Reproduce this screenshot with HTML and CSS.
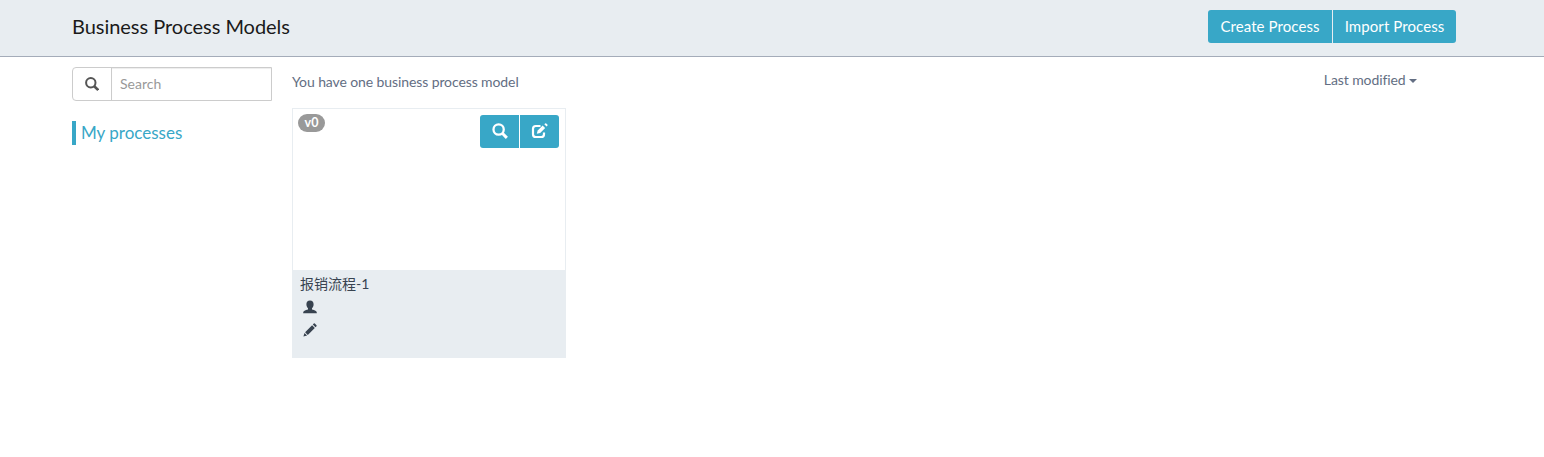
FILE: index.html
```
<!DOCTYPE html>
<html lang="en">
<head>
<meta charset="utf-8">
<title>Business Process Models</title>
<link rel="stylesheet" href="styles.css">
</head>
<body>
<header class="header">
  <h2>Business Process Models</h2>
  <div class="btn-group">
    <button class="btn create">Create Process</button>
    <button class="btn import">Import Process</button>
  </div>
</header>
<main class="content">
  <aside class="sidebar">
    <div class="search">
      <span class="addon"><svg width="14" height="14" viewBox="0 0 14 14"><circle cx="5.8" cy="5.7" r="4.7" fill="none" stroke="currentColor" stroke-width="2"/><path d="M9 9l4.200 4" stroke="currentColor" stroke-width="2.6"/></svg></span>
      <input type="text" placeholder="Search">
    </div>
    <a class="filter">My processes</a>
  </aside>
  <section class="models">
    <div class="toolbar">
      <span class="message">You have one business process model</span>
      <span class="sort">Last modified <i class="caret"></i></span>
    </div>
    <article class="card">
      <div class="preview">
        <span class="badge">v0</span>
        <div class="btn-group">
          <button class="btn icon-btn"><svg width="16" height="16" viewBox="0 0 14 14"><circle cx="5.8" cy="5.7" r="4.5" fill="none" stroke="currentColor" stroke-width="2"/><path d="M9 9l4 4" stroke="currentColor" stroke-width="2.6"/></svg></button>
          <button class="btn icon-btn"><svg width="17" height="16" viewBox="0 0 17 16"><path d="M9.500 3H4.800Q2 3 2 5.800v5.400Q2 14 4.800 14h5.400Q13 14 13 11.200V9.500" fill="none" stroke="currentColor" stroke-width="2.2"/><path d="M5.800 10.800l.9-3.200 5-5 2.500 2.500-5 5z" fill="currentColor"/><path d="M13.300 1.200l.8-.8q.6-.4 1.100 0l1.200 1.200q.4.600 0 1.100l-.8.8z" fill="currentColor"/><path d="M11.900 2l2.900 2.900" stroke="#38a7c7" stroke-width="1"/></svg></button>
        </div>
      </div>
      <div class="details">
        <h3>报销流程-1</h3>
        <svg class="user" width="14" height="14" viewBox="0 0 14 14"><path d="M7 .5c2.400 0 3.600 1.500 3.600 3.800 0 1.700-.6 3.100-1.600 4v1.100c2.800.8 4.800 1.500 4.800 3v.9H.2v-.9c0-1.500 2-2.200 4.800-3V8.300c-1-.9-1.600-2.300-1.600-4C3.400 2 4.600.5 7 .5z" fill="currentColor"/></svg>
        <svg class="pencil" width="14" height="14" viewBox="0 0 14 14"><path d="M.4 13.600l1.100-3.700 2.600 2.600zM2.100 9.200l7-7 2.700 2.700-7 7zM9.800 1.500l1-1q.5-.4 1 0l1.700 1.700q.4.500 0 1l-1 1z" fill="currentColor"/></svg>
      </div>
    </article>
  </section>
</main>
</body>
</html>
```
FILE: styles.css
```
* { box-sizing: border-box; }
body { margin: 0; background: #fff; font: 14px/20px Lato, "Noto Sans CJK SC", sans-serif; color: #636e83; }
h2, h3 { margin: 0; font-weight: 400; }
svg { display: block; }
.header { display: flex; justify-content: space-between; height: 57px; padding: 10px 88px 0 72px; background: #e8edf1; border-bottom: 1px solid #a4acb9; }
.header h2 { font-size: 20px; line-height: 32px; letter-spacing: -.03px; color: #1a1a1a; }
.btn-group { display: flex; gap: 1px; }
.btn { height: 33px; margin: 0; padding: 0; border: 0; background: #38a7c7; color: #fff; font: 15px/33px Lato, sans-serif; letter-spacing: .08px; white-space: nowrap; }
.create { width: 124px; }
.import { width: 123px; }
.btn:first-child { border-radius: 3px 0 0 3px; }
.btn:last-child { border-radius: 0 3px 3px 0; }
.content { display: flex; gap: 20px; padding: 10px 88px 0 72px; }
.sidebar { width: 200px; }
.search { display: flex; height: 34px; border: 1px solid #ccc; border-radius: 4px 0 0 4px; }
.addon { display: flex; align-items: center; justify-content: center; width: 39px; border-right: 1px solid #ccc; color: #555; }
.search input { flex: 1; min-width: 0; padding: 0 8px 2px; border: 0; font: 14px Lato, sans-serif; box-shadow: inset 0 1px 1px rgba(0, 0, 0, .075); }
.search input::placeholder { color: #999; }
.filter { display: block; height: 24px; margin-top: 20px; padding-left: 5px; border-left: 4px solid #38a7c7; font-size: 17px; line-height: 24px; color: #38a7c7; }
.models { flex: 1; }
.toolbar { display: flex; justify-content: space-between; height: 41px; padding: 3px 39px 0 0; letter-spacing: -.1px; }
.message { padding-top: 2px; }
.caret { display: inline-block; border: 4px solid transparent; border-top-color: currentColor; border-bottom: 0; vertical-align: middle; }
.card { width: 274px; height: 250px; border: 1px solid #e8edf1; }
.preview { display: flex; justify-content: space-between; align-items: flex-start; height: 161px; padding: 6px 6px 0 5px; }
.badge { width: 27px; height: 18px; margin-top: -1px; border-radius: 9px; background: #999; color: #fff; font-size: 12.5px; font-weight: 700; line-height: 18px; text-align: center; }
.icon-btn { display: flex; justify-content: center; width: 39px; padding: 8px 0 0; }
.details { height: 87px; padding: 4px 7px; background: #e8edf1; color: #384350; }
.details h3 { font-size: 14px; line-height: 20px; }
.user { margin: 6px 0 0 3px; }
.pencil { margin: 9px 0 0 3px; }
```
